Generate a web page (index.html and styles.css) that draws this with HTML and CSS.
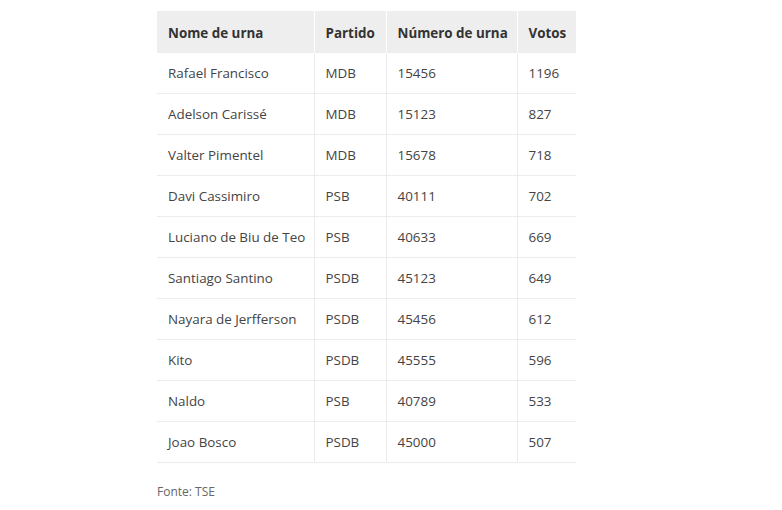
FILE: index.html
```html
<!DOCTYPE html>
<html lang="pt-BR">
<head>
<meta charset="utf-8">
<link rel="stylesheet" href="styles.css">
</head>
<body>
<div class="wrap">
<table class="results">
<thead>
<tr><th class="c1">Nome de urna</th><th class="c2">Partido</th><th class="c3">Número de urna</th><th class="c4">Votos</th></tr>
</thead>
<tbody>
<tr><td>Rafael Francisco</td><td>MDB</td><td>15456</td><td>1196</td></tr>
<tr><td>Adelson Carissé</td><td>MDB</td><td>15123</td><td>827</td></tr>
<tr><td>Valter Pimentel</td><td>MDB</td><td>15678</td><td>718</td></tr>
<tr><td>Davi Cassimiro</td><td>PSB</td><td>40111</td><td>702</td></tr>
<tr><td>Luciano de Biu de Teo</td><td>PSB</td><td>40633</td><td>669</td></tr>
<tr><td>Santiago Santino</td><td>PSDB</td><td>45123</td><td>649</td></tr>
<tr><td>Nayara de Jerfferson</td><td>PSDB</td><td>45456</td><td>612</td></tr>
<tr><td>Kito</td><td>PSDB</td><td>45555</td><td>596</td></tr>
<tr><td>Naldo</td><td>PSB</td><td>40789</td><td>533</td></tr>
<tr><td>Joao Bosco</td><td>PSDB</td><td>45000</td><td>507</td></tr>
</tbody>
</table>
<p class="source">Fonte: TSE</p>
</div>
</body>
</html>
```
FILE: styles.css
```css
html, body {
  margin: 0;
  padding: 0;
  background: #fff;
}
body {
  font-family: "Open Sans", "Liberation Sans", sans-serif;
  color: #444;
}
.wrap {
  padding: 11px 0 0 157px;
}
.results {
  border-collapse: collapse;
  table-layout: fixed;
  width: 419px;
  font-size: 13.4px;
}
.results th {
  background: #eeeeee;
  color: #333;
  font-weight: 700;
  text-align: left;
  height: 42px;
  padding: 1px 0 0 11px;
  border-right: 1px solid #fff;
  box-sizing: border-box;
}
.results th:last-child { border-right: none; }
.results td {
  height: 40px;
  padding: 0 0 0 11px;
  border-right: 1px solid #ececec;
  border-bottom: 1px solid #ececec;
  color: #444;
}
.results td:last-child { border-right: none; }
.results th.c1 { width: 157px; }
.results th.c2 { width: 72px; }
.results th.c3 { width: 131px; }
.results th.c4 { width: 59px; }
.source {
  margin: 20px 0 0;
  font-size: 12px;
  color: #666;
}
```
